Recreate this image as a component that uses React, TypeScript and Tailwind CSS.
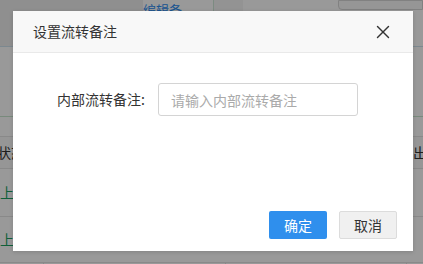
import { X } from "lucide-react";

export default function App() {
  return (
    <div
      className="relative w-[423px] h-[264px] overflow-hidden bg-white"
      style={{ fontFamily: '"Noto Sans CJK SC", "Noto Sans", sans-serif' }}
    >
      {/* page behind the mask */}
      <div className="flex flex-col w-full h-full text-[14px] text-[#333]">
        <div className="flex h-[47px] border-b border-[#cfe3ef]">
          <div className="w-[143px] bg-[#eeeeee]" />
          <div className="w-[70px] text-[#2d8cf0] leading-[20px] text-[13px]">编辑备</div>
          <div className="w-[30px] border-l border-[#cfe8d8] bg-[#f6f6f6]" />
          <div className="w-[95px] bg-white" />
          <div className="flex-1 h-[10px] border border-[#d8d8d8] rounded-bl-[4px] bg-[#fafafa]" />
        </div>
        <div className="h-[70px] border-b border-[#c9e6cf]" />
        <div className="h-[20px] border-b border-[#e4e4e4]" />
        <div className="flex h-[32px] items-center justify-between border-b border-[#e4e4e4] bg-[#fafafa]">
          <span className="-ml-[3px]">状态</span>
          <span className="mr-[-4px]">出</span>
        </div>
        <div className="flex h-[48px] items-center border-b border-[#e4e4e4]">
          <span className="text-[#19a15f]">上架</span>
        </div>
        <div className="flex h-[46px] items-center border-b border-[#e4e4e4]">
          <span className="text-[#19a15f]">上架</span>
        </div>
        <div className="flex flex-1">
          <div className="w-[44px] border-r border-[#e4e4e4]" />
          <div className="w-[182px] border-r border-[#e4e4e4]" />
          <div className="w-[181px] border-r border-[#e4e4e4]" />
        </div>
      </div>

      {/* mask */}
      <div className="absolute inset-0 bg-black/40" />

      {/* dialog */}
      <div className="absolute left-[13px] top-[11px] w-[400px] h-[240px] bg-white flex flex-col shadow-[0_1px_4px_rgba(0,0,0,0.15)]">
        <div className="flex items-center justify-between h-[42px] pl-[20px] pr-[19px] bg-[#f8f8f8] border-b border-[#e9e9e9]">
          <span className="text-[14px] text-[#333]">设置流转备注</span>
          <X size={22} strokeWidth={1.5} className="text-[#333]" />
        </div>
        <div className="flex items-center h-[33px] mt-[30px]">
          <label className="w-[145px] pr-[13px] text-right text-[14px] text-[#333]">内部流转备注:</label>
          <input
            placeholder="请输入内部流转备注"
            className="w-[200px] h-[33px] px-[12px] text-[14px] border border-[#d4d4d4] rounded-[3px] outline-none placeholder:text-[#aaa]"
          />
        </div>
        <div className="flex-1" />
        <div className="flex justify-end gap-[12px] pr-[16px] pb-[12px]">
          <button className="w-[58px] h-[28px] rounded-[2px] bg-[#2f8fed] text-white text-[14px]">确定</button>
          <button className="w-[58px] h-[28px] rounded-[2px] bg-[#f0f0f0] border border-[#dcdcdc] text-[#333] text-[14px]">取消</button>
        </div>
      </div>
    </div>
  );
}
